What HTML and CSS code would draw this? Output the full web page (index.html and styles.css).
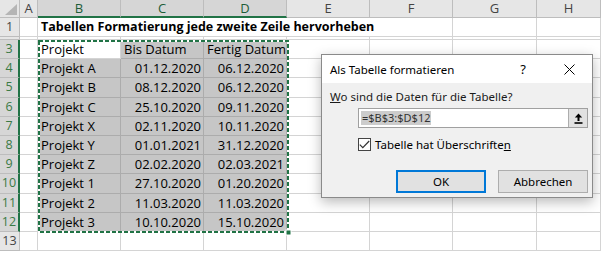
FILE: index.html
```html
<!DOCTYPE html>
<html>
<head>
    <title>Als Tabelle formatieren</title>
    <link rel="stylesheet" href="styles.css">
</head>
<body>
    <div class="sheet">
        <div class="row head">
            <div class="cell corner"><span class="tri"></span></div>
            <div class="cell ch">A</div>
            <div class="cell ch sel">B</div>
            <div class="cell ch sel">C</div>
            <div class="cell ch sel">D</div>
            <div class="cell ch">E</div>
            <div class="cell ch">F</div>
            <div class="cell ch">G</div>
            <div class="cell ch">H</div>
        </div>
        <div class="row r1">
            <div class="cell rh">1</div>
            <div class="cell"></div>
            <div class="cell title">Tabellen Formatierung jede zweite Zeile hervorheben</div>
            <div class="cell"></div>
            <div class="cell"></div>
        </div>
        <div class="row r2">
            <div class="cell rh"></div>
            <div class="cell"></div><div class="cell"></div><div class="cell"></div><div class="cell"></div>
            <div class="cell"></div><div class="cell"></div><div class="cell"></div><div class="cell"></div>
        </div>
        <div class="row">
            <div class="cell rh sel">3</div>
            <div class="cell"></div>
            <div class="cell active">Projekt</div>
            <div class="cell g">Bis Datum</div>
            <div class="cell g">Fertig Datum</div>
            <div class="cell"></div><div class="cell"></div><div class="cell"></div><div class="cell"></div>
        </div>
        <div class="row">
            <div class="cell rh sel">4</div>
            <div class="cell"></div>
            <div class="cell g">Projekt A</div>
            <div class="cell g num">01.12.2020</div>
            <div class="cell g num">06.12.2020</div>
            <div class="cell"></div><div class="cell"></div><div class="cell"></div><div class="cell"></div>
        </div>
        <div class="row">
            <div class="cell rh sel">5</div>
            <div class="cell"></div>
            <div class="cell g">Projekt B</div>
            <div class="cell g num">08.12.2020</div>
            <div class="cell g num">06.12.2020</div>
            <div class="cell"></div><div class="cell"></div><div class="cell"></div><div class="cell"></div>
        </div>
        <div class="row">
            <div class="cell rh sel">6</div>
            <div class="cell"></div>
            <div class="cell g">Projekt C</div>
            <div class="cell g num">25.10.2020</div>
            <div class="cell g num">09.11.2020</div>
            <div class="cell"></div><div class="cell"></div><div class="cell"></div><div class="cell"></div>
        </div>
        <div class="row">
            <div class="cell rh sel">7</div>
            <div class="cell"></div>
            <div class="cell g">Projekt X</div>
            <div class="cell g num">02.11.2020</div>
            <div class="cell g num">10.11.2020</div>
            <div class="cell"></div><div class="cell"></div><div class="cell"></div><div class="cell"></div>
        </div>
        <div class="row">
            <div class="cell rh sel">8</div>
            <div class="cell"></div>
            <div class="cell g">Projekt Y</div>
            <div class="cell g num">01.01.2021</div>
            <div class="cell g num">31.12.2020</div>
            <div class="cell"></div><div class="cell"></div><div class="cell"></div><div class="cell"></div>
        </div>
        <div class="row">
            <div class="cell rh sel">9</div>
            <div class="cell"></div>
            <div class="cell g">Projekt Z</div>
            <div class="cell g num">02.02.2020</div>
            <div class="cell g num">02.03.2021</div>
            <div class="cell"></div><div class="cell"></div><div class="cell"></div><div class="cell"></div>
        </div>
        <div class="row">
            <div class="cell rh sel">10</div>
            <div class="cell"></div>
            <div class="cell g">Projekt 1</div>
            <div class="cell g num">27.10.2020</div>
            <div class="cell g num">01.20.2020</div>
            <div class="cell"></div><div class="cell"></div><div class="cell"></div><div class="cell"></div>
        </div>
        <div class="row">
            <div class="cell rh sel">11</div>
            <div class="cell"></div>
            <div class="cell g">Projekt 2</div>
            <div class="cell g num">11.03.2020</div>
            <div class="cell g num">11.03.2020</div>
            <div class="cell"></div><div class="cell"></div><div class="cell"></div><div class="cell"></div>
        </div>
        <div class="row">
            <div class="cell rh sel">12</div>
            <div class="cell"></div>
            <div class="cell g">Projekt 3</div>
            <div class="cell g num">10.10.2020</div>
            <div class="cell g num">15.10.2020</div>
            <div class="cell"></div><div class="cell"></div><div class="cell"></div><div class="cell"></div>
        </div>
        <div class="row">
            <div class="cell rh">13</div>
            <div class="cell"></div><div class="cell"></div><div class="cell"></div><div class="cell"></div>
            <div class="cell"></div><div class="cell"></div><div class="cell"></div><div class="cell"></div>
        </div>

        <!-- marching ants around B3:D12 -->
        <svg class="ants" width="256" height="198" viewBox="0 0 256 198">
            <rect x="1" y="1" width="249" height="191" fill="none" stroke="#ffffff" stroke-width="2"/>
            <rect x="1" y="1" width="249" height="191" fill="none" stroke="#217346" stroke-width="2" stroke-dasharray="4 2"/>
            <rect x="248" y="190" width="5" height="5" fill="#217346" stroke="#ffffff" stroke-width="1"/>
        </svg>

        <div class="dialog">
            <div class="dlg-title">
                <span class="dlg-caption">Als Tabelle formatieren</span>
                <span class="dlg-help">?</span>
                <span class="dlg-close">
                    <svg width="11" height="11" viewBox="0 0 11 11">
                        <path d="M0.5 0.5 L10.5 10.5 M10.5 0.5 L0.5 10.5" stroke="#000" stroke-width="1"/>
                    </svg>
                </span>
            </div>
            <div class="dlg-body">
                <div class="dlg-label"><u>W</u>o sind die Daten für die Tabelle?</div>
                <div class="ref-box">
                    <div class="ref-input"><span class="ref-text">=$B$3:$D$12</span></div>
                    <div class="ref-btn">
                        <svg width="9" height="11" viewBox="0 0 9 11">
                            <path d="M4.5 0.5 L0.8 4.5 H3.5 V8 H5.5 V4.5 H8.2 Z" fill="#000"/>
                            <path d="M0.5 10 H8.5" stroke="#000" stroke-width="1.6"/>
                        </svg>
                    </div>
                </div>
                <label class="check">
                    <span class="box">
                        <svg width="11" height="9" viewBox="0 0 11 9">
                            <path d="M0.8 4.6 L3.8 7.6 L10.2 1" fill="none" stroke="#333" stroke-width="1.2"/>
                        </svg>
                    </span>
                    <span>Tabelle hat Überschrifte<u>n</u></span>
                </label>
                <div class="dlg-buttons">
                    <button class="btn primary">OK</button>
                    <button class="btn">Abbrechen</button>
                </div>
            </div>
        </div>
    </div>
</body>
</html>
```
FILE: styles.css
```css
body {
    margin: 0;
    background-color: #ffffff;
    font-family: "Open Sans", sans-serif;
    overflow: hidden;
}

.sheet {
    position: relative;
    width: 601px;
    height: 254px;
    overflow: hidden;
}

.row {
    display: grid;
    grid-template-columns: 20px 18px 83px 83px 83px 83px 83px 84px 1fr;
    height: 19.2px;
}

.cell {
    box-sizing: border-box;
    border-right: 1px solid #d4d4d4;
    border-bottom: 1px solid #d4d4d4;
    padding: 0 3px;
    font-size: 13px;
    line-height: 18px;
    color: #000000;
    white-space: nowrap;
    overflow: hidden;
}

.head {
    height: 18px;
}

.r1 {
    height: 19px;
}

.r2 {
    height: 3px;
}

.head .cell {
    background-color: #e6e6e6;
    border-color: #bdbdbd;
    color: #444444;
    text-align: center;
    line-height: 17px;
    padding: 0;
}

.head .sel {
    background-color: #d6d6d6;
    color: #1d5d38;
    border-bottom: 2px solid #217346;
}

.corner {
    position: relative;
}

.tri {
    position: absolute;
    right: 2px;
    bottom: 2px;
    width: 0;
    height: 0;
    border-left: 12px solid transparent;
    border-bottom: 11px solid #b5b5b5;
}

.rh {
    background-color: #e6e6e6;
    border-color: #bdbdbd;
    color: #444444;
    text-align: center;
    padding: 0;
    font-size: 12.5px;
}

.rh.sel {
    background-color: #d6d6d6;
    color: #3a7a45;
    border-right: 2px solid #217346;
}

.title {
    grid-column: span 5;
    font-weight: bold;
    font-size: 12.5px;
    padding-left: 3px;
}

.g {
    background-color: #c6c6c6;
    border-color: #acacac;
}

.active {
    background-color: #ffffff;
}

.num {
    text-align: right;
    padding-right: 2px;
}

.ants {
    position: absolute;
    left: 38px;
    top: 40px;
}

/* dialog */
.dialog {
    position: absolute;
    left: 321px;
    top: 54px;
    width: 272px;
    height: 144px;
    box-sizing: border-box;
    border: 1px solid #8a8a8a;
    background-color: #f0f0f0;
    box-shadow: 0 4px 12px rgba(0, 0, 0, 0.28);
    font-family: "Noto Sans", sans-serif;
    font-size: 11.5px;
    color: #000000;
}

.dlg-title {
    display: flex;
    align-items: center;
    height: 28px;
    background-color: #ffffff;
    padding-left: 8px;
}

.dlg-caption {
    flex: 1;
    font-size: 11.5px;
}

.dlg-help {
    width: 46px;
    text-align: center;
    font-size: 13px;
}

.dlg-close {
    width: 46px;
    display: flex;
    justify-content: center;
}

.dlg-body {
    padding: 6px 4px 0 8px;
}

.dlg-label {
    line-height: 16px;
    color: #1a1a1a;
}

.ref-box {
    display: flex;
    margin: 3px 0 0 28px;
    height: 20px;
    box-sizing: border-box;
    border: 1px solid #a0a0a0;
    background-color: #ffffff;
}

.ref-input {
    flex: 1;
    display: flex;
    align-items: center;
    padding-left: 2px;
}

.ref-text {
    background-color: #cccccc;
    color: #333333;
    font-size: 11px;
    line-height: 14px;
    padding: 0 1px;
}

.ref-btn {
    width: 18px;
    display: flex;
    align-items: center;
    justify-content: center;
    background-color: #e1e1e1;
    border-left: 1px solid #adadad;
}

.check {
    display: flex;
    align-items: center;
    gap: 4px;
    margin: 10px 0 0 28px;
    height: 13px;
}

.box {
    width: 13px;
    height: 13px;
    box-sizing: border-box;
    border: 1px solid #444444;
    background-color: #ffffff;
    display: flex;
    align-items: center;
    justify-content: center;
}

.dlg-buttons {
    display: flex;
    justify-content: flex-end;
    gap: 12px;
    margin-top: 19px;
}

.btn {
    width: 90px;
    height: 23px;
    box-sizing: border-box;
    border: 1px solid #adadad;
    background-color: #e1e1e1;
    font-family: "Noto Sans", sans-serif;
    font-size: 11.5px;
    color: #000000;
    padding: 0;
}

.btn.primary {
    border: 2px solid #0078d7;
}
```
